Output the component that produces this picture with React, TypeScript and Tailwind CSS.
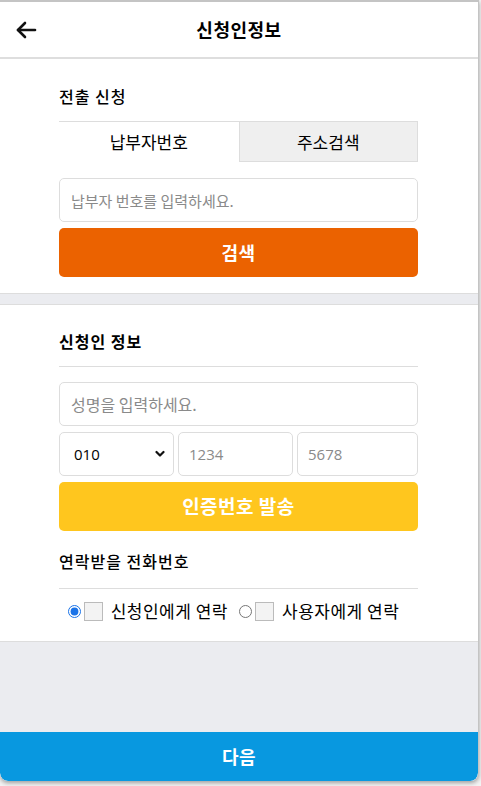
import { useState } from 'react'

const font = { fontFamily: '"Noto Sans CJK KR", "Noto Sans", sans-serif' }
const latin = { fontFamily: '"Open Sans", "Noto Sans", sans-serif' }

function BackArrow() {
  return (
    <svg width="24" height="24" viewBox="0 0 24 24" fill="none" stroke="#111" strokeWidth="2.6" strokeLinecap="round" strokeLinejoin="round">
      <path d="M21 12H4" />
      <path d="M11 5l-7 7 7 7" />
    </svg>
  )
}

export default function App() {
  const [tab, setTab] = useState(0)
  const [contact, setContact] = useState(0)

  return (
    <div className="w-[481px] h-[786px] bg-[#f3f3f3] overflow-hidden" style={font}>
      <div className="w-[479px] h-[781px] flex flex-col bg-white border-t-2 border-r border-[#c4c4c4] rounded-b-lg shadow-[0_2px_4px_rgba(0,0,0,0.35)] overflow-hidden">
        {/* Header */}
        <header className="h-[57px] shrink-0 grid grid-cols-[56px_1fr_56px] items-center border-b-2 border-[#dedede]">
          <button className="pl-[14px] flex items-center">
            <BackArrow />
          </button>
          <h1 className="text-center text-[18px] font-bold text-black tracking-[0.5px]">신청인정보</h1>
          <div />
        </header>

        {/* 전출 신청 */}
        <section className="pl-[59px] pr-[60px] pt-[27px] pb-[16px]">
          <h2 className="text-[16px] leading-[20px] font-medium text-black tracking-[1px]">전출 신청</h2>
          <div className="mt-[15px] grid grid-cols-2 h-[41px] text-[17px]">
            <button
              onClick={() => setTab(0)}
              className={tab === 0 ? 'bg-white border-t border-[#dddddd] text-black' : 'bg-[#efefef] border border-[#dddddd] text-black'}
            >
              납부자번호
            </button>
            <button
              onClick={() => setTab(1)}
              className={tab === 1 ? 'bg-white border-t border-[#dddddd] text-black' : 'bg-[#efefef] border border-[#dddddd] text-black'}
            >
              주소검색
            </button>
          </div>
          <input
            className="mt-[16px] w-full h-[44px] rounded-[5px] border border-[#dddddd] px-[11px] text-[15px] placeholder:text-[#8a8a8a] outline-none"
            placeholder="납부자 번호를 입력하세요."
          />
          <button className="mt-[6px] w-full h-[49px] rounded-[5px] bg-[#eb6200] text-white text-[18px] font-bold tracking-[0.5px]">
            검색
          </button>
        </section>

        <div className="h-[12px] shrink-0 bg-[#ebecf0] border-y border-[#dddddd]" />

        {/* 신청인 정보 */}
        <section className="pl-[59px] pr-[60px] pt-[26px] pb-[20px] border-b border-[#dddddd]">
          <h2 className="text-[16px] leading-[20px] font-bold text-black tracking-[1px]">신청인 정보</h2>
          <div className="mt-[15px] h-px bg-[#dddddd]" />
          <input
            className="mt-[15px] w-full h-[44px] rounded-[5px] border border-[#dddddd] px-[11px] text-[16px] placeholder:text-[#8a8a8a] outline-none"
            placeholder="성명을 입력하세요."
          />
          <div className="mt-[6px] flex gap-[4px] h-[44px]">
            <div className="w-[115px] h-full rounded-[5px] border border-[#dddddd] flex items-center justify-between pl-[14px] pr-[8px]">
              <span className="text-[15px] text-black" style={latin}>010</span>
              <svg width="10" height="8" viewBox="0 0 10 8" fill="none" stroke="#111" strokeWidth="2.2" strokeLinecap="round" strokeLinejoin="round">
                <path d="M1.5 2l3.5 3.5L8.5 2" />
              </svg>
            </div>
            <input
              className="w-[115px] h-full rounded-[5px] border border-[#dddddd] px-[10px] text-[15px] placeholder:text-[#8a8a8a] outline-none"
              style={latin}
              placeholder="1234"
            />
            <input
              className="flex-1 min-w-0 h-full rounded-[5px] border border-[#dddddd] px-[10px] text-[15px] placeholder:text-[#8a8a8a] outline-none"
              style={latin}
              placeholder="5678"
            />
          </div>
          <button className="mt-[6px] w-full h-[49px] rounded-[5px] bg-[#ffc61e] text-white text-[19px] font-bold tracking-[0.5px]">
            인증번호 발송
          </button>

          <h3 className="mt-[20px] text-[16px] leading-[20px] font-medium text-black tracking-[1px]">연락받을 전화번호</h3>
          <div className="mt-[17px] h-px bg-[#dddddd]" />
          <div className="mt-[12px] flex items-center justify-center gap-[11px] pr-[10px] text-[17px] text-black tracking-[0.5px]">
            {['신청인에게 연락', '사용자에게 연락'].map((label, i) => (
              <label key={label} className="flex items-center">
                <input
                  type="radio"
                  name="contact"
                  checked={contact === i}
                  onChange={() => setContact(i)}
                  className="w-[13px] h-[13px] m-0 accent-[#1a73e8]"
                />
                <span className="ml-[3px] w-[19px] h-[19px] bg-[#f3f3f3] border border-[#bbbbbb]" />
                <span className="ml-[8px] leading-[20px]">{label}</span>
              </label>
            ))}
          </div>
        </section>

        <div className="flex-1 bg-[#ebecf0]" />

        <button className="h-[49px] shrink-0 bg-[#0898e0] text-white text-[18px] font-bold tracking-[0.5px] rounded-b-lg">
          다음
        </button>
      </div>
    </div>
  )
}
